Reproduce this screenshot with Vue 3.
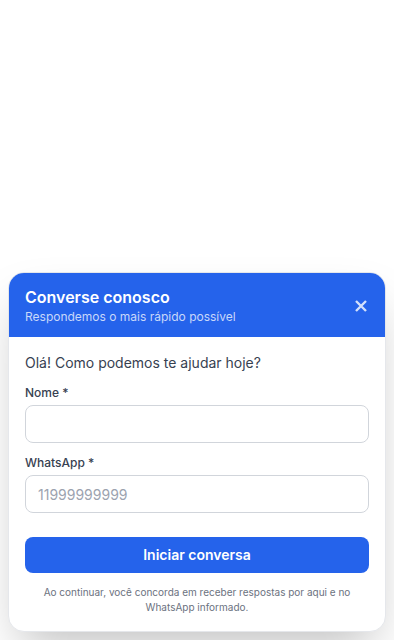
<script setup>
import { ref } from 'vue'

const open = ref(true)
const name = ref('')
const phone = ref('')
</script>

<template>
  <main class="stage">
    <section v-if="open" class="card" aria-labelledby="chat-title">
      <header class="head">
        <div>
          <h1 id="chat-title" class="title">Converse conosco</h1>
          <p class="subtitle">Respondemos o mais rápido possível</p>
        </div>
        <button class="close" type="button" aria-label="Fechar" @click="open = false">
          <svg viewBox="0 0 16 16" width="16" height="16" aria-hidden="true">
            <path d="M3 4 13 14M13 4 3 14" fill="none" stroke="currentColor" stroke-width="2.4" />
          </svg>
        </button>
      </header>
      <form class="body" @submit.prevent>
        <p class="greeting">Olá! Como podemos te ajudar hoje?</p>
        <div class="field">
          <label for="name">Nome *</label>
          <input id="name" v-model="name" type="text" required />
        </div>
        <div class="field">
          <label for="phone">WhatsApp *</label>
          <input id="phone" v-model="phone" type="tel" placeholder="11999999999" required />
        </div>
        <button class="submit" type="submit">Iniciar conversa</button>
        <p class="note">Ao continuar, você concorda em receber respostas por aqui e no WhatsApp informado.</p>
      </form>
    </section>
  </main>
</template>

<style>
body {
  background: #fff;
}
</style>

<style scoped>
.stage {
  box-sizing: border-box;
  min-height: 100vh;
  margin-right: 6px;
  padding: 8px;
  display: flex;
  flex-direction: column;
  justify-content: flex-end;
  overflow: hidden;
  font-family: Inter, "Liberation Sans", sans-serif;
}
.card {
  border: 1px solid #e5e7eb;
  border-radius: 16px;
  overflow: hidden;
  background: #fff;
  box-shadow: 0 25px 50px -12px rgba(0, 0, 0, 0.25);
}
h1,
p {
  margin: 0;
}
.head {
  display: flex;
  align-items: center;
  justify-content: space-between;
  padding: 12px 16px;
  background: #2563eb;
  color: #fff;
}
.title {
  font-size: 16px;
  line-height: 24px;
  font-weight: 600;
}
.subtitle {
  font-size: 12px;
  line-height: 16px;
  color: rgba(255, 255, 255, 0.75);
}
.close {
  display: flex;
  padding: 0;
  border: 0;
  background: none;
  color: rgba(255, 255, 255, 0.8);
  cursor: pointer;
}
.body {
  display: flex;
  flex-direction: column;
  padding: 16px;
}
.greeting {
  margin-bottom: 12px;
  font-size: 14px;
  line-height: 20px;
  color: #374151;
}
.field {
  display: flex;
  flex-direction: column;
  gap: 4px;
  margin-bottom: 12px;
}
label {
  font-size: 12px;
  line-height: 16px;
  font-weight: 500;
  color: #374151;
}
input {
  box-sizing: border-box;
  width: 100%;
  height: 38px;
  padding: 8px 12px;
  border: 1px solid #d1d5db;
  border-radius: 8px;
  background: #fff;
  font: inherit;
  font-size: 14px;
  line-height: 20px;
  color: #111827;
}
input::placeholder {
  color: #9ca3af;
}
.submit {
  margin: 12px 0;
  padding: 8px 16px;
  border: 0;
  border-radius: 8px;
  background: #2563eb;
  color: #fff;
  font: inherit;
  font-size: 14px;
  line-height: 20px;
  font-weight: 600;
  cursor: pointer;
}
.note {
  font-size: 10px;
  line-height: 15px;
  text-align: center;
  color: #6b7280;
}
</style>
